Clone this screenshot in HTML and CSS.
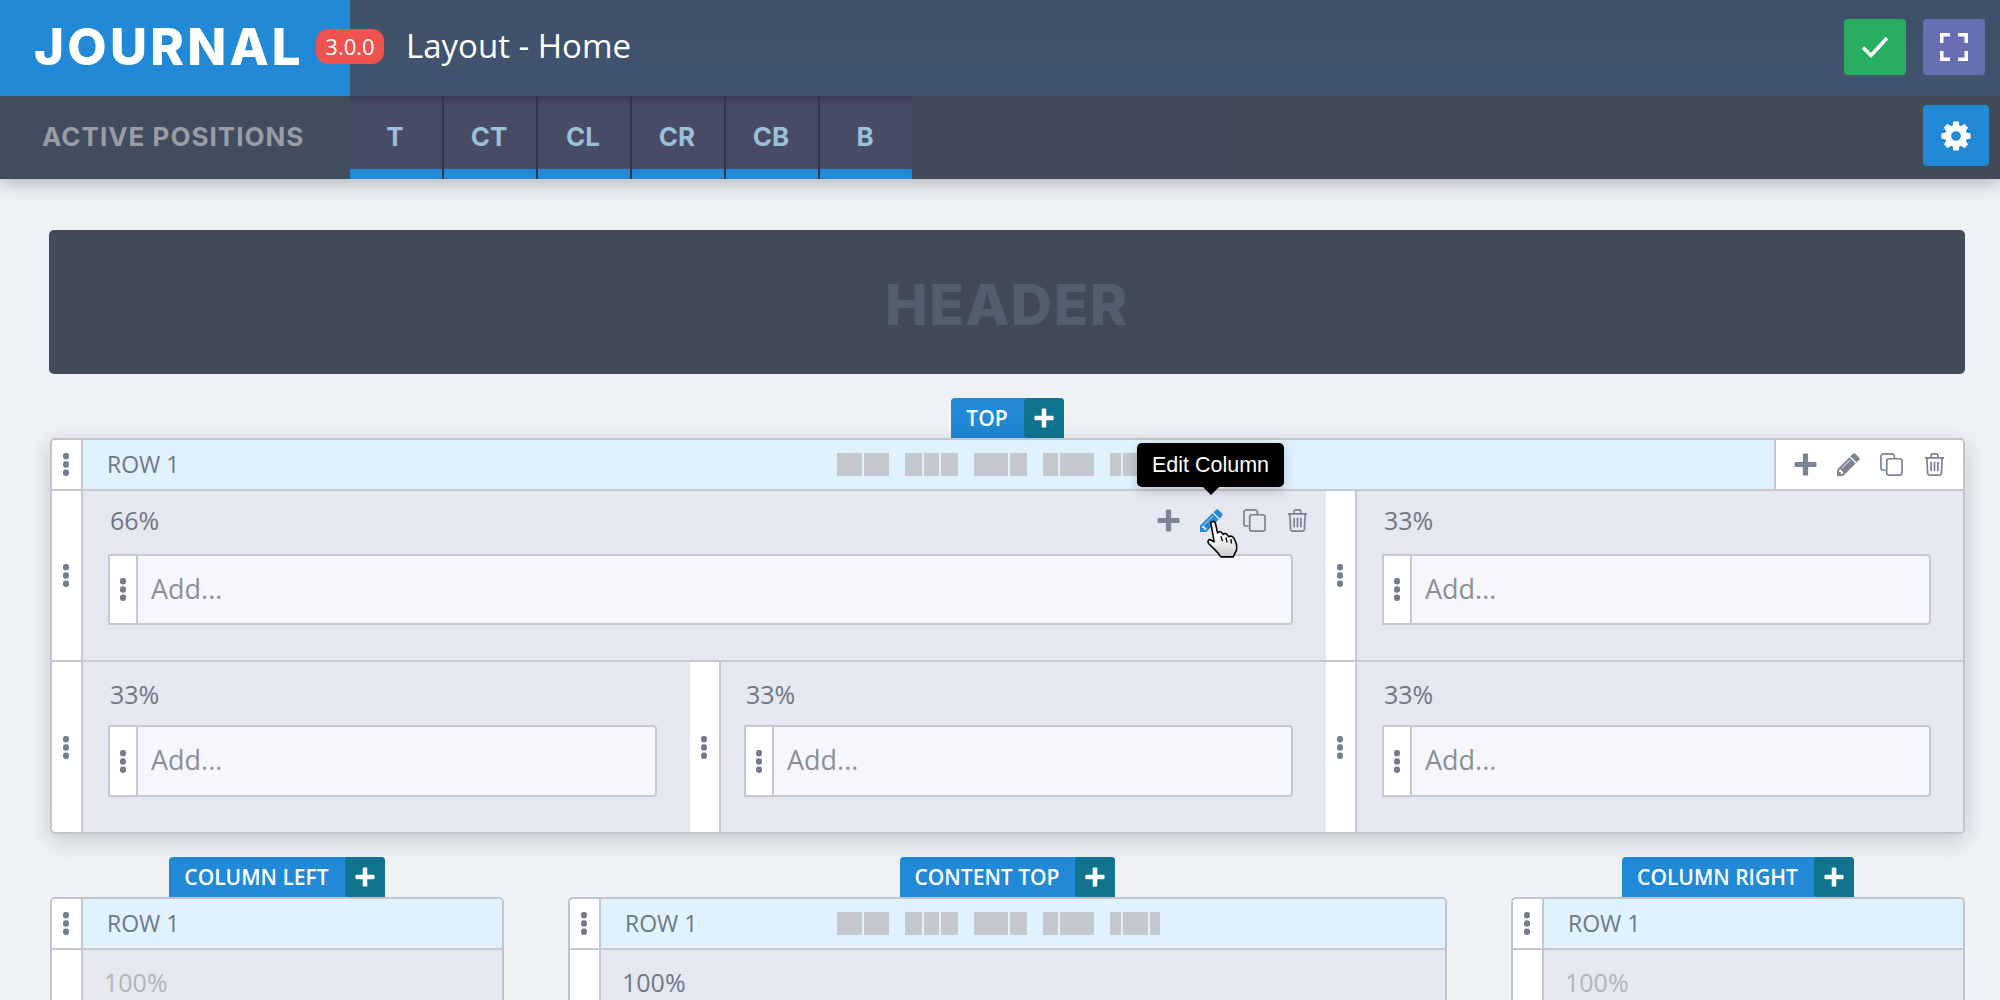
FILE: index.html
```html
<!DOCTYPE html>
<html lang="en">
<head>
<meta charset="utf-8">
<title>Journal Layout</title>
<link rel="stylesheet" href="styles.css">
</head>
<body>
<svg class="defs" width="0" height="0" aria-hidden="true">
  <symbol id="dots" viewBox="0 0 6 23"><rect width="6" height="6.4" rx="2.4"/><rect y="8.3" width="6" height="6.4" rx="2.4"/><rect y="16.600" width="6" height="6.4" rx="2.4"/></symbol>
  <symbol id="plus" viewBox="0 0 22 22"><path d="M8.500 1.500a1 1 0 0 1 1-1h3a1 1 0 0 1 1 1v7h7a1 1 0 0 1 1 1v3a1 1 0 0 1-1 1h-7v7a1 1 0 0 1-1 1h-3a1 1 0 0 1-1-1v-7h-7a1 1 0 0 1-1-1v-3a1 1 0 0 1 1-1h7z"/></symbol>
  <symbol id="pencil" viewBox="128 128 1540 1540"><path d="M491 1536l91-91-235-235-91 91v107h128v128h107zm523-928q0-22-22-22-10 0-17 7l-542 542q-7 7-7 17 0 22 22 22 10 0 17-7l542-542q7-7 7-17zm-54-192l416 416-832 832h-416v-416zm683 96q0 53-37 90l-166 166-416-416 166-165q36-38 90-38 53 0 91 38l235 234q37 39 37 91z"/></symbol>
  <symbol id="copy" viewBox="0 0 24 24"><path class="line" d="M6 18H3.500A2.500 2.500 0 0 1 1 15.500V3.500A2.500 2.500 0 0 1 3.500 1h9A2.500 2.500 0 0 1 15 3.500V6"/><rect class="line" x="7" y="6" width="16" height="17" rx="2.500"/></symbol>
  <symbol id="trash" viewBox="0 0 22 24"><path class="line" d="M1 5h20M3 5l.8 16.500A2 2 0 0 0 5.800 23h10.400a2 2 0 0 0 2-1.500L19 5M7.500 5V2.500A1.500 1.500 0 0 1 9 1h4a1.500 1.500 0 0 1 1.500 1.500V5M7.500 9v10M11 9v10M14.500 9v10"/></symbol>
</svg>

<header class="topbar">
  <div class="logo">
    <span class="logo-text">JOURNAL</span>
    <span class="version">3.0.0</span>
  </div>
  <div class="page-title">Layout - Home</div>
  <div class="top-actions">
    <button class="btn btn-green" type="button">
      <svg class="btn-icon" viewBox="0 0 28 22"><path class="btn-line" d="M2 11.500l8 8L26 2"/></svg>
    </button>
    <button class="btn btn-purple" type="button">
      <svg class="btn-icon-lg" viewBox="0 0 28 28"><path d="M0 0h10v3.500H3.500V10H0zM18 0h10v10h-3.500V3.500H18zM0 18h3.500v6.500H10V28H0zM24.500 18H28v10H18v-3.500h6.500z"/></svg>
    </button>
  </div>
</header>

<nav class="posbar">
  <div class="pos-label">ACTIVE POSITIONS</div>
  <ul class="tabs">
    <li class="tab">T</li>
    <li class="tab">CT</li>
    <li class="tab">CL</li>
    <li class="tab">CR</li>
    <li class="tab">CB</li>
    <li class="tab">B</li>
  </ul>
  <button class="btn btn-blue" type="button">
    <svg class="gear" viewBox="0 0 1792 1792"><path d="M1152 896q0-106-75-181t-181-75-181 75-75 181 75 181 181 75 181-75 75-181zm512-109v222q0 12-8 23t-20 13l-185 28q-19 54-39 91 35 50 107 138 10 12 10 25t-9 23q-27 37-99 108t-94 71q-12 0-26-9l-138-108q-44 23-91 38-16 136-29 186-7 28-36 28h-222q-14 0-24.500-8.500t-11.500-21.500l-28-184q-49-16-90-37l-141 107q-10 9-25 9-14 0-25-11-126-114-165-168-7-10-7-23 0-12 8-23 15-21 51-66.500t54-70.500q-27-50-41-99l-183-27q-13-2-21-12.500t-8-23.500v-222q0-12 8-23t19-13l186-28q14-46 39-92-40-57-107-138-10-12-10-24 0-10 9-23 26-36 98.500-107.500t94.500-71.500q13 0 26 10l138 107q44-23 91-38 16-136 29-186 7-28 36-28h222q14 0 24.500 8.500t11.500 21.500l28 184q49 16 90 37l142-107q9-9 24-9 13 0 25 10 129 119 165 170 7 8 7 22 0 12-8 23-15 21-51 66.500t-54 70.500q26 50 41 98l183 28q13 2 21 12.500t8 23.500z"/></svg>
  </button>
</nav>

<main class="main">
  <div class="header-block">HEADER</div>

  <section class="zone">
    <div class="tag"><span class="tag-name">TOP</span><span class="tag-add"><svg class="tag-plus"><use href="#plus"/></svg></span></div>
    <div class="panel panel-top">
      <div class="row-head">
        <div class="row-start">
          <div class="handle"><svg class="dots"><use href="#dots"/></svg></div>
          <span class="row-name">ROW 1</span>
        </div>
        <div class="skeleton">
          <span class="word"><i class="w25"></i><i class="w25"></i></span>
          <span class="word"><i class="w17"></i><i class="w15"></i><i class="w17"></i></span>
          <span class="word"><i class="w34"></i><i class="w17"></i></span>
          <span class="word"><i class="w15"></i><i class="w34"></i></span>
          <span class="word"><i class="w11"></i><i class="w25"></i><i class="w10"></i></span>
        </div>
        <div class="row-tools">
          <svg class="tool tool-solid"><use href="#plus"/></svg>
          <svg class="tool tool-solid"><use href="#pencil"/></svg>
          <svg class="tool"><use href="#copy"/></svg>
          <svg class="tool"><use href="#trash"/></svg>
        </div>
      </div>

      <div class="cols cols-a">
        <div class="handle"><svg class="dots"><use href="#dots"/></svg></div>
        <div class="col">
          <div class="col-top">
            <span class="pct">66%</span>
            <div class="col-tools">
              <svg class="tool tool-solid"><use href="#plus"/></svg>
              <svg class="tool tool-active"><use href="#pencil"/></svg>
              <svg class="tool"><use href="#copy"/></svg>
              <svg class="tool"><use href="#trash"/></svg>
            </div>
          </div>
          <div class="add"><div class="add-handle"><svg class="dots"><use href="#dots"/></svg></div><span class="add-text">Add...</span></div>
        </div>
        <div class="handle"><svg class="dots"><use href="#dots"/></svg></div>
        <div class="col col-last">
          <div class="col-top"><span class="pct">33%</span></div>
          <div class="add"><div class="add-handle"><svg class="dots"><use href="#dots"/></svg></div><span class="add-text">Add...</span></div>
        </div>
      </div>

      <div class="cols cols-b">
        <div class="handle"><svg class="dots"><use href="#dots"/></svg></div>
        <div class="col">
          <div class="col-top"><span class="pct">33%</span></div>
          <div class="add"><div class="add-handle"><svg class="dots"><use href="#dots"/></svg></div><span class="add-text">Add...</span></div>
        </div>
        <div class="handle"><svg class="dots"><use href="#dots"/></svg></div>
        <div class="col">
          <div class="col-top"><span class="pct">33%</span></div>
          <div class="add"><div class="add-handle"><svg class="dots"><use href="#dots"/></svg></div><span class="add-text">Add...</span></div>
        </div>
        <div class="handle"><svg class="dots"><use href="#dots"/></svg></div>
        <div class="col col-last">
          <div class="col-top"><span class="pct">33%</span></div>
          <div class="add"><div class="add-handle"><svg class="dots"><use href="#dots"/></svg></div><span class="add-text">Add...</span></div>
        </div>
      </div>

      <div class="tooltip">Edit Column</div>
      <svg class="hand" viewBox="0 0 30 34">
        <defs><linearGradient id="handfill" x1="0" y1="0" x2="0" y2="1"><stop offset=".4" stop-color="#fff"/><stop offset="1" stop-color="#c9c9c9"/></linearGradient></defs>
        <path fill="url(#handfill)" stroke="#000" stroke-width="1.400" stroke-linejoin="round" d="M5 2.500Q7 0 9 2.500L11 11.500Q13 9.500 15 11.500L16 13Q18 11 20 13.500L21 15Q23.500 13.500 25.500 16Q29 22 28 27L25 33L14 33L11 29L3 21Q1.500 18.500 4 17.500L8 19.500Z"/>
        <path fill="none" stroke="#000" stroke-width="1.200" d="M14 14.500L15.500 19M18.500 15.500L19.500 20M23 17L23.500 21"/>
      </svg>
    </div>
  </section>

  <div class="lower">
    <section class="zone">
      <div class="tag"><span class="tag-name">COLUMN LEFT</span><span class="tag-add"><svg class="tag-plus"><use href="#plus"/></svg></span></div>
      <div class="panel panel-open">
        <div class="row-head row-head-plain">
          <div class="row-start">
            <div class="handle"><svg class="dots"><use href="#dots"/></svg></div>
            <span class="row-name">ROW 1</span>
          </div>
        </div>
        <div class="cols cols-one">
          <div class="handle"></div>
          <div class="col col-narrow"><div class="col-top"><span class="pct pct-muted">100%</span></div></div>
        </div>
      </div>
    </section>

    <section class="zone">
      <div class="tag"><span class="tag-name">CONTENT TOP</span><span class="tag-add"><svg class="tag-plus"><use href="#plus"/></svg></span></div>
      <div class="panel panel-open">
        <div class="row-head">
          <div class="row-start">
            <div class="handle"><svg class="dots"><use href="#dots"/></svg></div>
            <span class="row-name">ROW 1</span>
          </div>
          <div class="skeleton">
            <span class="word"><i class="w25"></i><i class="w25"></i></span>
            <span class="word"><i class="w17"></i><i class="w15"></i><i class="w17"></i></span>
            <span class="word"><i class="w34"></i><i class="w17"></i></span>
            <span class="word"><i class="w15"></i><i class="w34"></i></span>
            <span class="word"><i class="w11"></i><i class="w25"></i><i class="w10"></i></span>
          </div>
          <div></div>
        </div>
        <div class="cols cols-one">
          <div class="handle"></div>
          <div class="col col-narrow"><div class="col-top"><span class="pct">100%</span></div></div>
        </div>
      </div>
    </section>

    <section class="zone">
      <div class="tag"><span class="tag-name">COLUMN RIGHT</span><span class="tag-add"><svg class="tag-plus"><use href="#plus"/></svg></span></div>
      <div class="panel panel-open">
        <div class="row-head row-head-plain">
          <div class="row-start">
            <div class="handle"><svg class="dots"><use href="#dots"/></svg></div>
            <span class="row-name">ROW 1</span>
          </div>
        </div>
        <div class="cols cols-one">
          <div class="handle"></div>
          <div class="col col-narrow"><div class="col-top"><span class="pct pct-muted">100%</span></div></div>
        </div>
      </div>
    </section>
  </div>
</main>
</body>
</html>
```

FILE: styles.css
```css
* { box-sizing: border-box; }
html, body { margin: 0; height: 1000px; overflow: hidden; }
body { background: #eef2f5; font-family: "Open Sans", "Liberation Sans", sans-serif; color: #6f7785; }
.defs { position: absolute; }
.line { fill: none; stroke: currentColor; stroke-width: 1.800; }
button { border: 0; padding: 0; font: inherit; }

.topbar { position: relative; z-index: 3; height: 96px; display: flex; align-items: center; background: linear-gradient(#3f5069, #41546f); }
.logo { position: relative; align-self: stretch; width: 350px; background: #2189d6; display: flex; align-items: center; padding: 0 0 4px 34px; }
.logo-text { font-family: Inter, "Open Sans", sans-serif; font-weight: 800; font-size: 51px; letter-spacing: 3.200px; color: #fff; line-height: 1; }
.version { position: absolute; right: -34px; top: 29px; width: 68px; height: 35px; border-radius: 12px; background: #ef5350; color: #fff; font-size: 22px; font-weight: 500; line-height: 35px; text-align: center; }
.page-title { margin: 0 0 0 56px; color: #fff; font-size: 33px; line-height: 1; padding-bottom: 6px; }
.top-actions { margin-left: auto; margin-right: 15px; padding-bottom: 2px; display: flex; gap: 17px; }
.btn { display: flex; align-items: center; justify-content: center; border-radius: 4px; }
.btn-green { width: 62px; height: 56px; background: #27ae60; }
.btn-purple { width: 62px; height: 56px; background: #676fb2; }
.btn-icon { width: 28px; height: 22px; }
.btn-line { fill: none; stroke: #fff; stroke-width: 3.500; }
.btn-icon-lg { width: 28px; height: 28px; fill: #fff; }

.posbar { position: relative; z-index: 2; height: 83px; display: flex; background: linear-gradient(90deg, #414d5f, #434a55); box-shadow: 0 6px 16px rgba(0, 0, 0, .22); }
.pos-label { width: 350px; padding: 0 0 2px 42px; align-self: center; font-family: Inter, "Open Sans", sans-serif; font-weight: 700; font-size: 26px; color: #9a9ea4; white-space: nowrap; letter-spacing: 1px; }
.tabs { list-style: none; margin: 0; padding: 0; display: flex; gap: 2px; background: #2f3845; }
.tab { width: 92px; padding-top: 8px; padding-right: 2px; display: flex; align-items: center; justify-content: center; background: #484b66; border-bottom: 10px solid #2189d6; box-shadow: inset 0 8px 8px -6px rgba(0, 0, 0, .3); font-family: Inter, "Open Sans", sans-serif; font-weight: 700; font-size: 26px; color: #9dc0da; }
.btn-blue { margin: 9px 11px 13px auto; width: 66px; background: #2189d6; }
.gear { width: 34px; height: 34px; fill: #fff; }

.main { padding: 51px 35px 0 50px; }
.header-block { height: 144px; margin-left: -1px; padding-top: 4px; border-radius: 5px; background: #414b58; color: #535e6c; font-family: Inter, "Open Sans", sans-serif; font-weight: 800; font-size: 57px; letter-spacing: 1.500px; display: flex; align-items: center; justify-content: center; }

.zone { margin-top: 24px; display: flex; flex-direction: column; align-items: center; min-width: 0; }
.tag { height: 40px; display: flex; border-radius: 4px 4px 0 0; overflow: hidden; background: #2189d6; color: #fff; font-weight: 600; font-size: 21px; }
.tag-name { display: flex; align-items: center; padding: 0 16px 0 15px; white-space: nowrap; }
.tag-add { width: 40px; display: flex; align-items: center; justify-content: center; background: #10748f; border-radius: 4px 0 0 4px; }
.tag-plus { width: 20px; height: 20px; fill: #fff; }

.panel { position: relative; align-self: stretch; border: 2px solid #c1c4cc; border-radius: 5px; background: #fff; box-shadow: 0 6px 24px rgba(0, 0, 0, .18); }
.panel-open { height: 180px; border-bottom: 0; border-radius: 5px 5px 0 0; box-shadow: none; }

.row-head { height: 51px; display: grid; grid-template-columns: 1fr auto 1fr; align-items: stretch; background: #e0f2fe; border-bottom: 2px solid #c5c8d0; border-radius: 4px 4px 0 0; overflow: hidden; }
.row-head-plain { grid-template-columns: 1fr; }
.row-start { display: flex; align-items: center; min-width: 0; }
.row-name { margin-left: 24px; padding-bottom: 2px; font-size: 23px; color: #6f7785; }
.handle { width: 31px; align-self: stretch; padding-right: 1px; display: flex; align-items: center; justify-content: center; background: #fff; border-right: 2px solid #c5c8d0; }
.dots { width: 6px; height: 23px; fill: #737d8c; }

.skeleton { display: flex; align-items: center; gap: 16px; margin-right: 19px; }
.word { display: flex; gap: 2px; height: 23px; }
.word i { display: block; background: #c5c7cf; }
.w10 { width: 10px; }
.w11 { width: 11px; }
.w15 { width: 15px; }
.w17 { width: 17px; }
.w25 { width: 25px; }
.w34 { width: 34px; }

.row-tools { justify-self: end; width: 189px; display: flex; align-items: center; gap: 20px; padding-left: 18px; background: #fff; border-left: 2px solid #c5c8d0; }
.tool { width: 23px; height: 23px; flex: none; color: #7a8494; fill: #7a8494; }
.tool-active { fill: #2189d6; color: #2189d6; }

.cols { display: grid; background: #e5e8f0; }
.cols-a { grid-template-columns: 31px 1fr 29px 608px; height: 171px; border-bottom: 2px solid #c5c8d0; }
.cols-a .pct { margin-top: -3px; }
.cols-b { grid-template-columns: 31px 1fr 29px 1fr 29px 608px; height: 170px; border-radius: 0 0 4px 4px; overflow: hidden; }
.cols-b .pct { margin-top: 2px; }
.cols-b .add { height: 72px; }
.cols-one { grid-template-columns: 31px 1fr; height: 128px; }
.cols-one .pct { margin-top: 2px; }
.col { padding: 0 33px 0 25px; min-width: 0; }
.col-last { padding: 0 32px 0 27px; }
.col-narrow { padding-left: 19px; }
.col-top { height: 63px; display: flex; align-items: center; justify-content: space-between; padding: 1px 0 3px 2px; }
.pct { font-size: 25px; }
.pct-muted { color: #b1b4bc; }
.col-tools { display: flex; gap: 20px; margin-right: -16px; margin-top: -2px; }

.add { height: 71px; display: flex; background: #f6f7fc; border: 2px solid #c5c8d0; border-radius: 0 4px 4px 0; }
.add-handle { width: 28px; display: flex; align-items: center; justify-content: center; background: #fff; border-right: 2px solid #c5c8d0; }
.add-text { margin-left: 13px; padding-bottom: 3px; align-self: center; font-size: 27px; color: #8c8f96; }

.lower { display: grid; grid-template-columns: 454px 1fr 454px; gap: 64px; margin-top: -1px; }

.tooltip { position: absolute; left: 1085px; top: 3px; width: 147px; height: 44px; border-radius: 5px; background: #000; color: #fff; font-family: "Liberation Sans", sans-serif; font-size: 21.500px; line-height: 44px; text-align: center; box-shadow: 0 4px 12px rgba(0, 0, 0, .18); }
.tooltip::after { content: ""; position: absolute; left: 66px; top: 44px; border: 8px solid transparent; border-top-color: #000; border-bottom: 0; }
.hand { position: absolute; left: 1153px; top: 80px; width: 34px; height: 38px; }
```
